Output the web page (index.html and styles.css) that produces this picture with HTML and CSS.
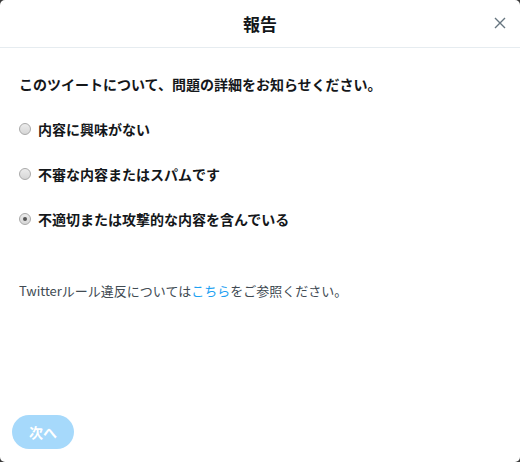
FILE: index.html
```html
<!DOCTYPE html>
<html lang="ja">
<head>
<meta charset="utf-8">
<link rel="stylesheet" href="styles.css">
</head>
<body>
<div class="modal">
  <header class="modal-header">
    <h1 class="modal-title">報告</h1>
    <button class="close-btn" aria-label="閉じる">
      <svg viewBox="0 0 12 12" width="12" height="12"><path d="M1 1 L11 11 M11 1 L1 11" stroke="#66757f" stroke-width="1.4" fill="none"/></svg>
    </button>
  </header>
  <div class="modal-body">
    <p class="question">このツイートについて、問題の詳細をお知らせください。</p>
    <ul class="options">
      <li class="option"><span class="radio"></span><span class="label">内容に興味がない</span></li>
      <li class="option"><span class="radio"></span><span class="label">不審な内容またはスパムです</span></li>
      <li class="option"><span class="radio checked"></span><span class="label">不適切または攻撃的な内容を含んでいる</span></li>
    </ul>
    <p class="note">Twitterルール違反については<a class="link" href="#">こちら</a>をご参照ください。</p>
  </div>
  <footer class="modal-footer">
    <button class="next-btn">次へ</button>
  </footer>
</div>
</body>
</html>
```

FILE: styles.css
```css
html, body {
  margin: 0;
  padding: 0;
  background: #3a3a3a;
}
body {
  width: 520px;
  height: 462px;
  font-family: "Noto Sans CJK JP", "Liberation Sans", sans-serif;
}
.modal {
  width: 520px;
  height: 462px;
  background: #fff;
  border-radius: 5px;
  display: flex;
  flex-direction: column;
  box-sizing: border-box;
}
.modal-header {
  height: 48px;
  border-bottom: 1px solid #e6ecf0;
  display: flex;
  align-items: center;
  justify-content: center;
  position: relative;
  box-sizing: border-box;
}
.modal-title {
  margin: 0;
  font-size: 17px;
  font-weight: bold;
  color: #14171a;
  line-height: 20px;
}
.close-btn {
  position: absolute;
  right: 14px;
  top: 17px;
  width: 12px;
  height: 12px;
  padding: 0;
  border: 0;
  background: none;
  display: flex;
  align-items: center;
  justify-content: center;
}
.modal-body {
  flex: 1;
  padding: 0 19px;
}
.question {
  margin: 26px 0 0;
  font-size: 14px;
  font-weight: bold;
  color: #14171a;
  line-height: 20px;
}
.options {
  list-style: none;
  margin: 25px 0 0;
  padding: 0;
  display: flex;
  flex-direction: column;
  gap: 25px;
}
.option {
  display: flex;
  align-items: center;
  height: 20px;
}
.radio {
  width: 12px;
  height: 12px;
  border-radius: 50%;
  border: 1px solid #a9a9a9;
  background: linear-gradient(#ececec, #d6d6d6);
  box-sizing: border-box;
  margin-right: 7px;
  position: relative;
  flex: none;
}
.radio.checked::after {
  content: "";
  position: absolute;
  left: 3px;
  top: 3px;
  width: 4px;
  height: 4px;
  border-radius: 50%;
  background: #555;
}
.label {
  font-size: 14px;
  font-weight: bold;
  color: #14171a;
  line-height: 20px;
}
.note {
  margin: 53px 0 0;
  font-size: 13px;
  color: #414b53;
  line-height: 18px;
}
.link {
  color: #1da1f2;
  text-decoration: none;
}
.modal-footer {
  padding: 0 12px 13px;
}
.next-btn {
  width: 62px;
  height: 34px;
  border: 0;
  border-radius: 17px;
  background: #a6d9fb;
  color: #fff;
  font-family: "Noto Sans CJK JP", sans-serif;
  font-size: 14px;
  font-weight: bold;
  padding: 0;
}
```
